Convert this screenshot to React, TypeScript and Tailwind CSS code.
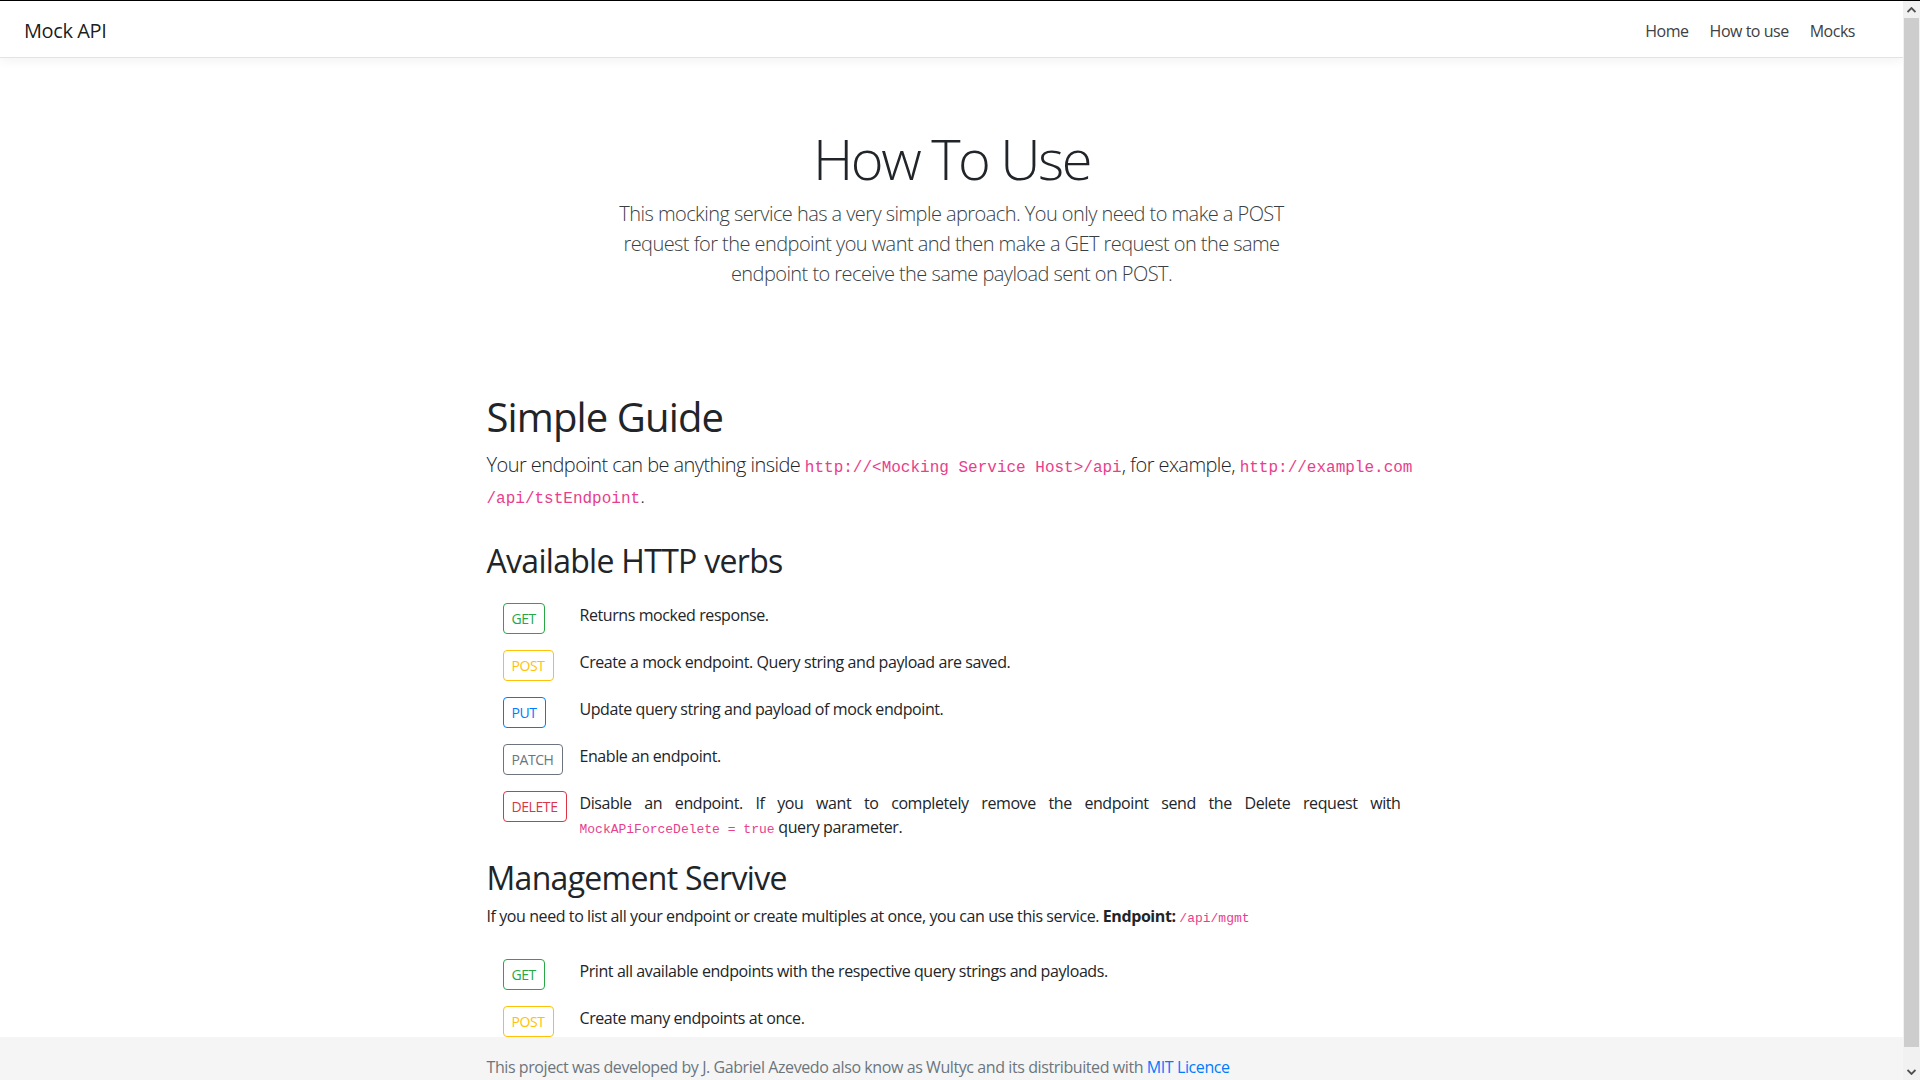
import React from "react";

type Verb = { name: string; color: string; desc: React.ReactNode };

const Badge = ({ name, color }: { name: string; color: string }) => (
  <span
    className={`inline-block rounded-[4px] border px-2 text-[14px] leading-[21px] py-[4px] tracking-[-0.03em] ${color}`}
  >
    {name}
  </span>
);

const Row = ({ v }: { v: Verb }) => (
  <div className="flex items-start mb-4">
    <div className="w-[93px] shrink-0 pl-4">
      <Badge name={v.name} color={v.color} />
    </div>
    <div className="flex-1 pr-4 text-[16px] leading-[24px] text-[#212529] text-justify tracking-[-0.026em]">
      {v.desc}
    </div>
  </div>
);

const GREEN = "text-[#28a745] border-[#28a745]";
const YELLOW = "text-[#ffc107] border-[#ffc107]";
const BLUE = "text-[#007bff] border-[#007bff]";
const GRAY = "text-[#6c757d] border-[#6c757d]";
const RED = "text-[#dc3545] border-[#dc3545]";

const codeCls = "font-['Liberation_Mono',monospace] text-[#e83e8c] tracking-normal leading-none";

export default function App() {
  const verbs: Verb[] = [
    { name: "GET", color: GREEN, desc: "Returns mocked response." },
    { name: "POST", color: YELLOW, desc: "Create a mock endpoint. Query string and payload are saved." },
    { name: "PUT", color: BLUE, desc: "Update query string and payload of mock endpoint." },
    { name: "PATCH", color: GRAY, desc: "Enable an endpoint." },
    {
      name: "DELETE",
      color: RED,
      desc: (
        <>
          Disable an endpoint. If you want to completely remove the endpoint send the Delete request with{" "}
          <code className={`${codeCls} text-[13px]`}>MockAPiForceDelete = true</code> query parameter.
        </>
      ),
    },
  ];
  const mgmt: Verb[] = [
    { name: "GET", color: GREEN, desc: "Print all available endpoints with the respective query strings and payloads." },
    { name: "POST", color: YELLOW, desc: "Create many endpoints at once." },
  ];

  return (
    <div className="h-[1080px] w-[1920px] overflow-hidden border-t border-black bg-white font-['Open_Sans',sans-serif] text-[#212529]">
      <div className="flex h-[1079px]">
        {/* main column */}
        <div className="w-[1903px] h-full overflow-hidden flex flex-col">
          {/* navbar */}
          <nav className="h-[57px] shrink-0 border-b border-[#e3e3e3] bg-white shadow-[0_3px_10px_rgba(0,0,0,0.05)] flex items-center justify-between pl-[24px] pr-[48px] pt-[3px] relative z-10">
            <span className="text-[20px] leading-[30px] text-[rgba(0,0,0,0.9)] tracking-[-0.02em]">Mock API</span>
            <div className="flex items-center gap-[21px] text-[16px] leading-[24px] text-[#3d4145] tracking-[-0.03em]">
              <span>Home</span>
              <span>How to use</span>
              <span>Mocks</span>
            </div>
          </nav>

          {/* hero */}
          <section className="pt-[67px] flex flex-col items-center text-center">
            <h1 className="text-[56px] leading-[67px] font-light text-[#212529] mb-[7px] tracking-[-0.045em]">
              How To Use
            </h1>
            <p className="text-[20px] leading-[30px] font-light text-[#3a3f44] w-[760px] tracking-[-0.028em]">
              This mocking service has a very simple aproach. You only need to make a POST
              <br />
              request for the endpoint you want and then make a GET request on the same
              <br />
              endpoint to receive the same payload sent on POST.
            </p>
          </section>

          {/* content */}
          <main className="w-[960px] mx-auto px-[15px] mt-[104px] shrink-0">
            <h1 className="text-[40px] leading-[48px] font-normal mb-2 tracking-[-0.022em]">Simple Guide</h1>
            <p className="text-[20px] leading-[31px] font-light mb-[31px] tracking-[-0.028em]">
              <span className="whitespace-nowrap">
                Your endpoint can be anything inside{" "}
                <code className={`${codeCls} text-[16px]`}>http://&lt;Mocking Service Host&gt;/api</code>, for
                example, <code className={`${codeCls} text-[16px]`}>http://example.com</code>
              </span>
              <br />
              <code className={`${codeCls} text-[16px]`}>/api/tstEndpoint</code>.
            </p>

            <h2 className="text-[32px] leading-[38px] font-normal mb-[23px] tracking-[-0.022em]">
              Available HTTP verbs
            </h2>
            <div>
              {verbs.map((v) => (
                <Row key={v.name} v={v} />
              ))}
            </div>

            <h2 className="text-[32px] leading-[38px] font-normal mt-[20px] mb-[7px] tracking-[-0.022em]">
              Management Servive
            </h2>
            <p className="text-[16px] leading-[24px] mb-[31px] tracking-[-0.026em]">
              If you need to list all your endpoint or create multiples at once, you can use this service.{" "}
              <b className="font-bold">Endpoint:</b> <code className={`${codeCls} text-[13px]`}>/api/mgmt</code>
            </p>
            <div>
              {mgmt.map((v) => (
                <Row key={v.name} v={v} />
              ))}
            </div>
          </main>

          {/* footer */}
          <footer className="shrink-0 bg-[#f5f5f5] h-[60px] mt-[-16px]">
            <div className="w-[960px] mx-auto px-[15px] py-[18px] text-[16px] leading-[24px] text-[#6c757d] tracking-[-0.026em]">
              This project was developed by J. Gabriel Azevedo also know as Wultyc and its distribuited with{" "}
              <span className="text-[#007bff]">MIT Licence</span>
            </div>
          </footer>
        </div>

        {/* scrollbar */}
        <div className="w-[17px] h-full bg-[#f1f1f1] flex flex-col">
          <div className="h-[17px] flex items-center justify-center">
            <svg width="9" height="6" viewBox="0 0 9 6">
              <path d="M0.5 5 L4.5 1 L8.5 5" fill="none" stroke="#505050" strokeWidth="1.8" />
            </svg>
          </div>
          <div className="mx-[1px] h-[1029px] bg-[#cdcdcd]" />
          <div className="flex-1" />
          <div className="h-[17px] flex items-center justify-center">
            <svg width="9" height="6" viewBox="0 0 9 6">
              <path d="M0.5 1 L4.5 5 L8.5 1" fill="none" stroke="#505050" strokeWidth="1.8" />
            </svg>
          </div>
        </div>
      </div>
    </div>
  );
}
